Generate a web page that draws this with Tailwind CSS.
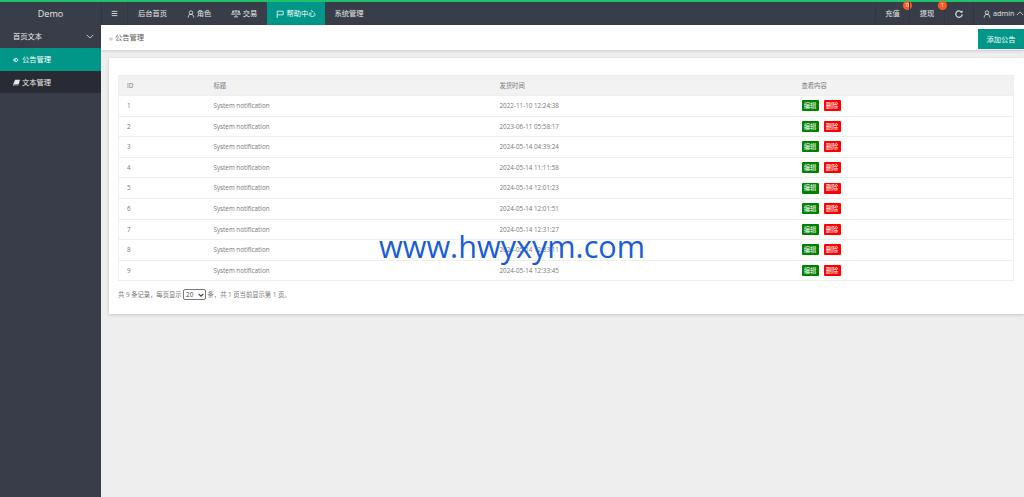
<!DOCTYPE html>
<html lang="en">
<head>
    <meta charset="UTF-8">
    <title>公告管理 - Demo</title>
    <script src="https://cdn.jsdelivr.net/npm/@tailwindcss/browser@4"></script>
</head>
<body class="relative h-[497px] w-[1024px] overflow-hidden bg-[#eeeeee] font-['Open_Sans','Noto_Sans_CJK_SC',sans-serif] text-[6.3px] text-[#777]">

    <!-- Top bar -->
    <header class="flex h-[25px] border-t-2 border-[#1fc16b] bg-[#393d49] text-[7.25px] text-[#e8e8e8]">
        <div class="flex w-[101px] items-center justify-center text-[9px]">Demo</div>
        <div class="flex w-[27px] items-center justify-center border-x border-[#333743]">
            <svg class="h-[7px] w-[7px]" viewBox="0 0 10 10" fill="none" stroke="currentColor" stroke-width="1.2"><path d="M1 2h8M1 5h8M1 8h8"/></svg>
        </div>
        <a class="flex w-[49px] items-center justify-center">后台首页</a>
        <a class="flex w-[44px] items-center justify-center gap-[2px]">
            <svg class="h-[8px] w-[8px]" viewBox="0 0 10 10" fill="none" stroke="currentColor"><circle cx="5" cy="3.2" r="2.2"/><path d="M1.500 9.500c0-3 1.500-4 3.500-4s3.500 1 3.500 4"/></svg>角色
        </a>
        <a class="flex w-[46px] items-center justify-center gap-[2px]">
            <svg class="h-[9px] w-[10px]" viewBox="0 0 12 10" fill="none" stroke="currentColor" stroke-width=".9"><path d="M6 1v8M3.500 9h5M1.500 2h9M2.500 2 .8 6h3.400zM9.500 2 7.800 6h3.400z"/></svg>交易
        </a>
        <a class="flex w-[58px] items-center justify-center gap-[2px] bg-[#009688] text-white">
            <svg class="h-[8px] w-[8px]" viewBox="0 0 10 10" fill="none" stroke="currentColor"><path d="M1.500 10V1.500h7.500v4.500H1.500"/></svg>帮助中心
        </a>
        <a class="flex w-[48px] items-center justify-center">系统管理</a>
        <div class="ml-auto flex">
            <a class="relative flex w-[34px] items-center justify-center border-l border-[#333743]">充值
                <span class="absolute left-[27px] top-[-1px] flex h-[9px] w-[9px] items-center justify-center rounded-full bg-[#ff5722] text-[6px] text-white">0</span>
            </a>
            <a class="relative flex w-[35px] items-center justify-center border-l border-[#333743]">提现
                <span class="absolute left-[28px] top-[-1px] flex h-[9px] w-[9px] items-center justify-center rounded-full bg-[#ff5722] text-[6px] text-white">1</span>
            </a>
            <a class="flex w-[29px] items-center justify-center border-l border-[#333743]">
                <svg class="h-[8px] w-[8px]" viewBox="0 0 10 10" fill="none" stroke="currentColor" stroke-width="1.400"><path d="M8.500 3.200A4 4 0 1 0 9 5.500"/><path d="M6.500 3.200h3v-2.700z" fill="currentColor" stroke="none"/></svg>
            </a>
            <a class="flex w-[51px] items-center gap-[2px] whitespace-nowrap border-l border-[#333743] pl-[9px]">
                <svg class="h-[8px] w-[8px] shrink-0" viewBox="0 0 10 10" fill="none" stroke="currentColor"><circle cx="5" cy="3.200" r="2.200"/><path d="M1.500 9.500c0-3 1.500-4 3.500-4s3.500 1 3.500 4"/></svg>admin
                <svg class="h-[5px] w-[8px] shrink-0" viewBox="0 0 10 6" fill="none" stroke="currentColor"><path d="M1 5l4-4 4 4"/></svg>
            </a>
        </div>
    </header>

    <div class="flex h-[472px]">
        <!-- Sidebar -->
        <aside class="w-[101px] shrink-0 bg-[#393d49] text-[7.25px] text-[#e8e8e8]">
            <div class="flex h-[23px] items-center justify-between pl-[13px] pr-[7px]">
                首页文本
                <svg class="h-[5px] w-[8px]" viewBox="0 0 10 6" fill="none" stroke="currentColor"><path d="M1 1l4 4 4-4"/></svg>
            </div>
            <div class="flex h-[23px] items-center gap-[3px] bg-[#009688] pl-[13px] text-white">
                <svg class="h-[6px] w-[6px]" viewBox="0 0 10 10" fill="none" stroke="currentColor" stroke-width="1.500"><path d="M5 1.500 8.500 5 5 8.500V6.500H1.500v-3H5z"/></svg>公告管理
            </div>
            <div class="flex h-[22px] items-center gap-[2px] bg-[#282b33] pl-[13px]">
                <svg class="h-[7px] w-[7px]" viewBox="0 0 10 10" fill="currentColor"><path d="M3 1h7L8 8H1.500C.5 8 .5 9.500 1.500 9.500H8V10H1C0 10 0 8.500.3 7.500z"/></svg>文本管理
            </div>
        </aside>

        <main class="min-w-0 flex-1">
            <!-- Breadcrumb bar -->
            <div class="flex h-[25px] items-center justify-between bg-white pl-[8px] text-[7.25px] text-[#555] shadow-[0_1px_3px_rgba(0,0,0,0.15)]">
                <span class="flex items-center gap-[2px]"><span class="text-[8px] text-[#999]">»</span>公告管理</span>
                <button class="mt-[4px] h-[20px] w-[46px] self-start bg-[#009688] text-[7.25px] text-white">添加公告</button>
            </div>

            <!-- Panel -->
            <section class="ml-[8px] mt-[8px] h-[256px] bg-white px-[9px] pt-[17px] shadow-[0_1px_3px_rgba(0,0,0,0.18)]">
                <table class="w-[896px] table-fixed border-collapse border border-[#eeeeee]">
                    <thead>
                        <tr class="h-[20px] bg-[#f2f2f2] text-left">
                            <th class="w-[95px] pl-[8px] font-normal">ID</th>
                            <th class="w-[286px] font-normal">标题</th>
                            <th class="w-[302px] font-normal">发货时间</th>
                            <th class="font-normal">查看内容</th>
                        </tr>
                    </thead>
                    <tbody>
                        <tr class="h-[20.6px] border-t border-[#eeeeee]">
                            <td class="pl-[8px]">1</td><td>System notification</td><td>2022-11-10 12:24:38</td>
                            <td><div class="flex gap-[5px]"><a class="flex h-[11px] w-[17px] items-center justify-center rounded-[1px] bg-[#008000] text-white">编辑</a><a class="flex h-[11px] w-[17px] items-center justify-center rounded-[1px] bg-[#ff0000] text-white">删除</a></div></td>
                        </tr>
                        <tr class="h-[20.6px] border-t border-[#eeeeee]">
                            <td class="pl-[8px]">2</td><td>System notification</td><td>2023-06-11 05:58:17</td>
                            <td><div class="flex gap-[5px]"><a class="flex h-[11px] w-[17px] items-center justify-center rounded-[1px] bg-[#008000] text-white">编辑</a><a class="flex h-[11px] w-[17px] items-center justify-center rounded-[1px] bg-[#ff0000] text-white">删除</a></div></td>
                        </tr>
                        <tr class="h-[20.6px] border-t border-[#eeeeee]">
                            <td class="pl-[8px]">3</td><td>System notification</td><td>2024-05-14 04:39:24</td>
                            <td><div class="flex gap-[5px]"><a class="flex h-[11px] w-[17px] items-center justify-center rounded-[1px] bg-[#008000] text-white">编辑</a><a class="flex h-[11px] w-[17px] items-center justify-center rounded-[1px] bg-[#ff0000] text-white">删除</a></div></td>
                        </tr>
                        <tr class="h-[20.6px] border-t border-[#eeeeee]">
                            <td class="pl-[8px]">4</td><td>System notification</td><td>2024-05-14 11:11:58</td>
                            <td><div class="flex gap-[5px]"><a class="flex h-[11px] w-[17px] items-center justify-center rounded-[1px] bg-[#008000] text-white">编辑</a><a class="flex h-[11px] w-[17px] items-center justify-center rounded-[1px] bg-[#ff0000] text-white">删除</a></div></td>
                        </tr>
                        <tr class="h-[20.6px] border-t border-[#eeeeee]">
                            <td class="pl-[8px]">5</td><td>System notification</td><td>2024-05-14 12:01:23</td>
                            <td><div class="flex gap-[5px]"><a class="flex h-[11px] w-[17px] items-center justify-center rounded-[1px] bg-[#008000] text-white">编辑</a><a class="flex h-[11px] w-[17px] items-center justify-center rounded-[1px] bg-[#ff0000] text-white">删除</a></div></td>
                        </tr>
                        <tr class="h-[20.6px] border-t border-[#eeeeee]">
                            <td class="pl-[8px]">6</td><td>System notification</td><td>2024-05-14 12:01:51</td>
                            <td><div class="flex gap-[5px]"><a class="flex h-[11px] w-[17px] items-center justify-center rounded-[1px] bg-[#008000] text-white">编辑</a><a class="flex h-[11px] w-[17px] items-center justify-center rounded-[1px] bg-[#ff0000] text-white">删除</a></div></td>
                        </tr>
                        <tr class="h-[20.6px] border-t border-[#eeeeee]">
                            <td class="pl-[8px]">7</td><td>System notification</td><td>2024-05-14 12:31:27</td>
                            <td><div class="flex gap-[5px]"><a class="flex h-[11px] w-[17px] items-center justify-center rounded-[1px] bg-[#008000] text-white">编辑</a><a class="flex h-[11px] w-[17px] items-center justify-center rounded-[1px] bg-[#ff0000] text-white">删除</a></div></td>
                        </tr>
                        <tr class="h-[20.6px] border-t border-[#eeeeee]">
                            <td class="pl-[8px]">8</td><td>System notification</td><td>2024-05-14 12:33:11</td>
                            <td><div class="flex gap-[5px]"><a class="flex h-[11px] w-[17px] items-center justify-center rounded-[1px] bg-[#008000] text-white">编辑</a><a class="flex h-[11px] w-[17px] items-center justify-center rounded-[1px] bg-[#ff0000] text-white">删除</a></div></td>
                        </tr>
                        <tr class="h-[20.6px] border-t border-[#eeeeee]">
                            <td class="pl-[8px]">9</td><td>System notification</td><td>2024-05-14 12:33:45</td>
                            <td><div class="flex gap-[5px]"><a class="flex h-[11px] w-[17px] items-center justify-center rounded-[1px] bg-[#008000] text-white">编辑</a><a class="flex h-[11px] w-[17px] items-center justify-center rounded-[1px] bg-[#ff0000] text-white">删除</a></div></td>
                        </tr>
                    </tbody>
                </table>
                <div class="mt-[8px] flex items-center gap-[1.500px]">
                    共 9 条记录，每页显示
                    <span class="flex h-[11px] w-[23px] items-center justify-between rounded-[2px] border border-[#777] pl-[2px] pr-[1px] text-[#444]">20
                        <svg class="h-[4px] w-[6px]" viewBox="0 0 10 6" fill="none" stroke="currentColor" stroke-width="2"><path d="M1 1l4 4 4-4"/></svg>
                    </span>
                    条，共 1 页当前显示第 1 页。
                </div>
            </section>
        </main>
    </div>

    <!-- Watermark over the page -->
    <div class="absolute left-[379px] top-[226px] font-['Open_Sans',sans-serif] text-[30.6px] leading-[40px] text-[#1a5cd6]">www.hwyxym.com</div>

</body>
</html>
